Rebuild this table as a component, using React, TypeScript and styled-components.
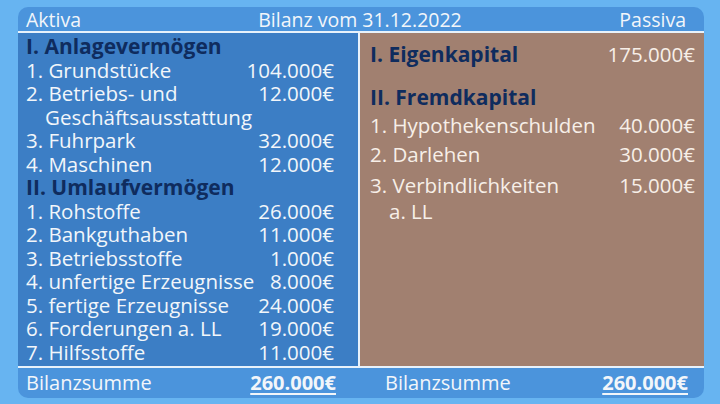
import React from "react";
import styled, { createGlobalStyle } from "styled-components";

const Global = createGlobalStyle`
  html, body { margin: 0; padding: 0; }
  body {
    width: 720px;
    height: 404px;
    overflow: hidden;
    background: #67b4f1;
    font-family: "Open Sans", "Noto Sans", sans-serif;
  }
`;

const Page = styled.div`
  box-sizing: border-box;
  width: 720px;
  height: 404px;
  padding: 7px 16px 6px 18px;
  display: flex;
`;

const Card = styled.div`
  flex: 1;
  display: grid;
  grid-template-rows: 26px 1fr 32px;
  background: #4b94dc;
  border-radius: 10px;
  overflow: hidden;
  color: #f2f6fa;
`;

const Header = styled.div`
  display: grid;
  grid-template-columns: 1fr auto 1fr;
  align-items: center;
  padding: 0 18px 0 8px;
  border-bottom: 2px solid #e8f2fb;
  font-size: 19.5px;
  line-height: 23px;
`;

const HeadLeft = styled.span`
  justify-self: start;
`;
const HeadCenter = styled.span`
  justify-self: center;
  padding-left: 8px;
`;
const HeadRight = styled.span`
  justify-self: end;
`;

const Body = styled.div`
  display: grid;
  grid-template-columns: 342px 1fr;
  min-height: 0;
`;

const Panel = styled.div<{ $tone: "blue" | "brown" }>`
  background: ${(p) => (p.$tone === "blue" ? "#3c7ec5" : "#a18070")};
  color: ${(p) => (p.$tone === "blue" ? "#f2f6fa" : "#f7efe8")};
  border-right: ${(p) => (p.$tone === "blue" ? "2px solid #e8f2fb" : "none")};
  padding: ${(p) => (p.$tone === "blue" ? "2px 24px 0 8px" : "10px 9px 0 10px")};
  display: flex;
  flex-direction: column;
  font-size: 20.5px;
`;

const Heading = styled.div<{ $gap?: number }>`
  font-weight: 700;
  font-size: 21px;
  color: #0f2c5e;
  line-height: 23.5px;
  margin-top: ${(p) => p.$gap ?? 0}px;
  display: flex;
  justify-content: space-between;
`;

const HeadAmount = styled.span`
  font-weight: 400;
  font-size: 20.5px;
  color: #f7efe8;
`;

const Row = styled.div<{ $lh?: number; $gap?: number }>`
  display: flex;
  justify-content: space-between;
  align-items: flex-start;
  line-height: ${(p) => p.$lh ?? 23.5}px;
  margin-top: ${(p) => p.$gap ?? 0}px;
`;

const Label = styled.span<{ $indent?: number }>`
  padding-left: ${(p) => p.$indent ?? 0}px;
  white-space: nowrap;
`;

const Wrap = styled.span`
  display: flex;
  flex-direction: column;
`;

const Amount = styled.span`
  white-space: nowrap;
`;

const Footer = styled.div`
  display: grid;
  grid-template-columns: 344px 1fr;
  border-top: 2px solid #e8f2fb;
  font-size: 20px;
`;

const FootCell = styled.div<{ $pl: number; $pr: number }>`
  display: flex;
  justify-content: space-between;
  align-items: center;
  padding: 0 ${(p) => p.$pr}px 2px ${(p) => p.$pl}px;
`;

const Total = styled.span`
  font-weight: 700;
  text-decoration: underline;
  text-underline-offset: 3px;
  text-decoration-thickness: 2px;
`;

const anlage: [string, string][] = [["1. Grundstücke", "104.000€"]];
const anlage2: [string, string][] = [
  ["3. Fuhrpark", "32.000€"],
  ["4. Maschinen", "12.000€"],
];
const umlauf: [string, string][] = [
  ["1. Rohstoffe", "26.000€"],
  ["2. Bankguthaben", "11.000€"],
  ["3. Betriebsstoffe", "1.000€"],
  ["4. unfertige Erzeugnisse", "8.000€"],
  ["5. fertige Erzeugnisse", "24.000€"],
  ["6. Forderungen a. LL", "19.000€"],
  ["7. Hilfsstoffe", "11.000€"],
];

const Rows = ({ items }: { items: [string, string][] }) => (
  <>
    {items.map(([l, a]) => (
      <Row key={l}>
        <Label>{l}</Label>
        <Amount>{a}</Amount>
      </Row>
    ))}
  </>
);

export default function App() {
  return (
    <>
      <Global />
      <Page>
        <Card>
          <Header>
            <HeadLeft>Aktiva</HeadLeft>
            <HeadCenter>Bilanz vom 31.12.2022</HeadCenter>
            <HeadRight>Passiva</HeadRight>
          </Header>
          <Body>
            <Panel $tone="blue">
              <Heading>I. Anlagevermögen</Heading>
              <Rows items={anlage} />
              <Row>
                <Wrap>
                  <Label>2. Betriebs- und</Label>
                  <Label $indent={19}>Geschäftsausstattung</Label>
                </Wrap>
                <Amount>12.000€</Amount>
              </Row>
              <Rows items={anlage2} />
              <Heading>II. Umlaufvermögen</Heading>
              <Rows items={umlauf} />
            </Panel>
            <Panel $tone="brown">
              <Heading>
                <span>I. Eigenkapital</span>
                <HeadAmount>175.000€</HeadAmount>
              </Heading>
              <Heading $gap={19}>II. Fremdkapital</Heading>
              <Row $gap={5}>
                <Label>1. Hypothekenschulden</Label>
                <Amount>40.000€</Amount>
              </Row>
              <Row $gap={5}>
                <Label>2. Darlehen</Label>
                <Amount>30.000€</Amount>
              </Row>
              <Row $gap={7} $lh={25.5}>
                <Wrap>
                  <Label>3. Verbindlichkeiten</Label>
                  <Label $indent={19}>a. LL</Label>
                </Wrap>
                <Amount>15.000€</Amount>
              </Row>
            </Panel>
          </Body>
          <Footer>
            <FootCell $pl={8} $pr={26}>
              <span>Bilanzsumme</span>
              <Total>260.000€</Total>
            </FootCell>
            <FootCell $pl={23} $pr={16}>
              <span>Bilanzsumme</span>
              <Total>260.000€</Total>
            </FootCell>
          </Footer>
        </Card>
      </Page>
    </>
  );
}
